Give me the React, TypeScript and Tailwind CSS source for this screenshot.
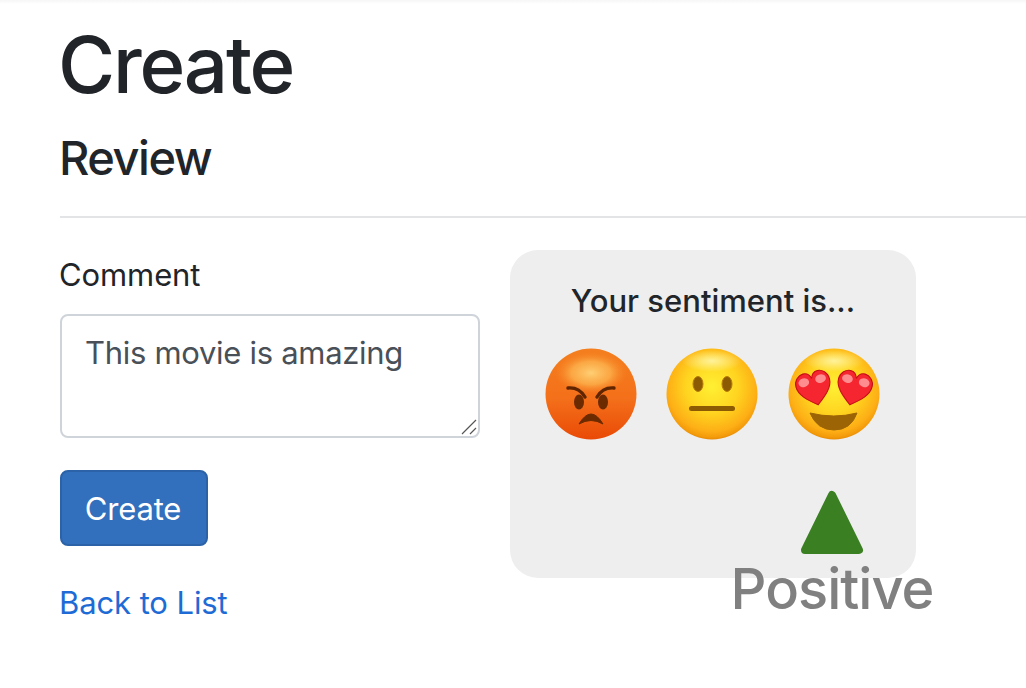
export default function App() {
  return (
    <div className="w-[1026px] h-[688px] overflow-hidden bg-white text-[#212529] font-['Inter','Liberation_Sans',sans-serif]">
      <div className="h-[4px] bg-gradient-to-b from-[#f6f6f6] to-white" />
      <div className="pl-[60px]">
        <h1 className="text-[78px] leading-[96px] font-medium tracking-[-2.2px] mt-[13px] h-[96px] -ml-[2px]">Create</h1>
        <h4 className="text-[47px] leading-[56px] font-medium tracking-[-1.5px] mt-[17px] -ml-[1px]">Review</h4>
        <hr className="mt-[30px] border-0 h-[2px] bg-[#e3e4e5]" />
        <div className="flex mt-[32px] items-start">
          <div className="w-[420px] shrink-0">
            <label className="block text-[31px] leading-[48px] mt-[1px] tracking-[-0.1px] -ml-[1px]">Comment</label>
            <div className="relative mt-[15px] w-[420px] h-[124px]">
              <textarea
                readOnly
                defaultValue="This movie is amazing"
                className="block w-[420px] h-[124px] resize-none rounded-[8px] border-2 border-[#ced4da] px-[23px] pt-[13px] pb-[11px] text-[31px] leading-[48px] text-[#495057] tracking-[-0.3px] outline-none"
              />
              <svg width="16" height="16" viewBox="0 0 16 16" className="absolute right-[3px] bottom-[3px]">
                <path d="M1 15 L15 1 M9 15 L15 9" stroke="#555" strokeWidth="1.2" fill="none" />
              </svg>
            </div>
            <button className="block mt-[32px] w-[148px] h-[76px] rounded-[8px] bg-[#326fbc] border-2 border-[#2b62a8] text-white text-[31px] tracking-[-0.2px] pt-[2px] pr-[2px]">Create</button>
            <a className="block mt-[37px] text-[31px] leading-[40px] text-[#1f6bd6] tracking-[-0.1px] -ml-[1px]">Back to List</a>
          </div>
          <div className="ml-[30px] w-[406px] h-[328px] rounded-[28px] bg-[#eeeeee] flex flex-col items-center">
            <p className="mt-[31px] text-[31px] leading-[40px] font-medium tracking-[0px]">Your sentiment is...</p>
            <div className="mt-[27px] w-full flex justify-center gap-[29.5px] pr-[2px]">
              <Angry />
              <Neutral />
              <Love />
            </div>
            <div className="self-start ml-[223px] mt-[49px] w-[198px] flex flex-col items-center">
              <svg width="66" height="68" viewBox="0 0 66 68" className="block">
                <path d="M33 6 L60 61 H6 Z" fill="#3a7f22" stroke="#3a7f22" strokeWidth="8" strokeLinejoin="round" />
              </svg>
              <span className="text-[56px] leading-[70px] font-[450] text-[#808080] tracking-[-1px] -mt-[3px] whitespace-nowrap">Positive</span>
            </div>
          </div>
        </div>
      </div>
    </div>
  );
}

function Angry() {
  return (
    <svg width="92" height="92" viewBox="0 0 92 92" className="shrink-0">
      <defs>
        <linearGradient id="a0" x1="0" y1="0" x2="0" y2="1">
          <stop offset="0" stopColor="#f47f1e" />
          <stop offset="0.55" stopColor="#f4701a" />
          <stop offset="1" stopColor="#e94a06" />
        </linearGradient>
        <radialGradient id="a1" cx="50%" cy="50%" r="50%">
          <stop offset="0" stopColor="#ffcf74" />
          <stop offset="0.55" stopColor="#fdb650" stopOpacity="0.75" />
          <stop offset="1" stopColor="#f88a2a" stopOpacity="0" />
        </radialGradient>
      </defs>
      <circle cx="46" cy="46" r="45.5" fill="url(#a0)" />
      <ellipse cx="46" cy="25" rx="36" ry="21" fill="url(#a1)" />
      <path d="M23 40 Q34 39 40 49" fill="none" stroke="#5f2500" strokeWidth="3.4" strokeLinecap="round" />
      <path d="M69 40 Q58 39 52 49" fill="none" stroke="#5f2500" strokeWidth="3.4" strokeLinecap="round" />
      <ellipse cx="34" cy="54" rx="5" ry="7.5" fill="#6b2a00" />
      <ellipse cx="58" cy="54" rx="5" ry="7.5" fill="#6b2a00" />
      <path d="M34 76 Q46 56 58 76 Q46 69 34 76 Z" fill="#6b2a00" stroke="#6b2a00" strokeWidth="1" strokeLinejoin="round" />
    </svg>
  );
}

function FaceBase({ id }: { id: string }) {
  return (
    <>
      <defs>
        <radialGradient id={id} cx="50%" cy="42%" r="58%">
          <stop offset="0" stopColor="#fff034" />
          <stop offset="0.5" stopColor="#ffd420" />
          <stop offset="0.85" stopColor="#fdae15" />
          <stop offset="0.96" stopColor="#f39a0a" />
          <stop offset="1" stopColor="#e68a04" />
        </radialGradient>
        <radialGradient id={id + "h"} cx="50%" cy="50%" r="50%">
          <stop offset="0" stopColor="#fff6a8" stopOpacity="0.9" />
          <stop offset="1" stopColor="#fff6a8" stopOpacity="0" />
        </radialGradient>
      </defs>
      <circle cx="46" cy="46" r="45.5" fill={`url(#${id})`} />
      <ellipse cx="46" cy="13" rx="30" ry="11" fill={`url(#${id}h)`} />
    </>
  );
}

function Neutral() {
  return (
    <svg width="92" height="92" viewBox="0 0 92 92" className="shrink-0">
      <FaceBase id="n1" />
      <ellipse cx="32" cy="36" rx="5" ry="7.5" fill="#8c5a02" stroke="#b97d08" strokeWidth="1" />
      <ellipse cx="61" cy="36" rx="5" ry="7.5" fill="#8c5a02" stroke="#b97d08" strokeWidth="1" />
      <rect x="23" y="58" width="46" height="5" rx="2.5" fill="#8c5a02" />
    </svg>
  );
}

function Heart({ x, angle }: { x: number; angle: number }) {
  return (
    <g transform={`translate(${x} 40) rotate(${angle}) scale(1.08)`}>
      <path
        d="M0 16 C-9 9 -16 3 -16 -5 C-16 -11 -11 -15 -7 -15 C-3 -15 -1 -13 0 -9 C1 -13 3 -15 7 -15 C11 -15 16 -11 16 -5 C16 3 9 9 0 16 Z"
        fill="#f5262f"
        stroke="#c40d15"
        strokeWidth="1"
      />
      <ellipse cx="-8" cy="-7" rx="5" ry="4" fill="#ff8d90" />
      <ellipse cx="8" cy="-7" rx="5" ry="4" fill="#ff8d90" />
    </g>
  );
}

function Love() {
  return (
    <svg width="92" height="92" viewBox="0 0 92 92" className="shrink-0">
      <FaceBase id="l1" />
      <Heart x={26} angle={-14} />
      <Heart x={66} angle={14} />
      <path d="M22 65 Q46 71 69 65 Q63 82 46 82 Q29 82 22 65 Z" fill="#9c6405" stroke="#9c6405" strokeWidth="1" strokeLinejoin="round" />
    </svg>
  );
}
